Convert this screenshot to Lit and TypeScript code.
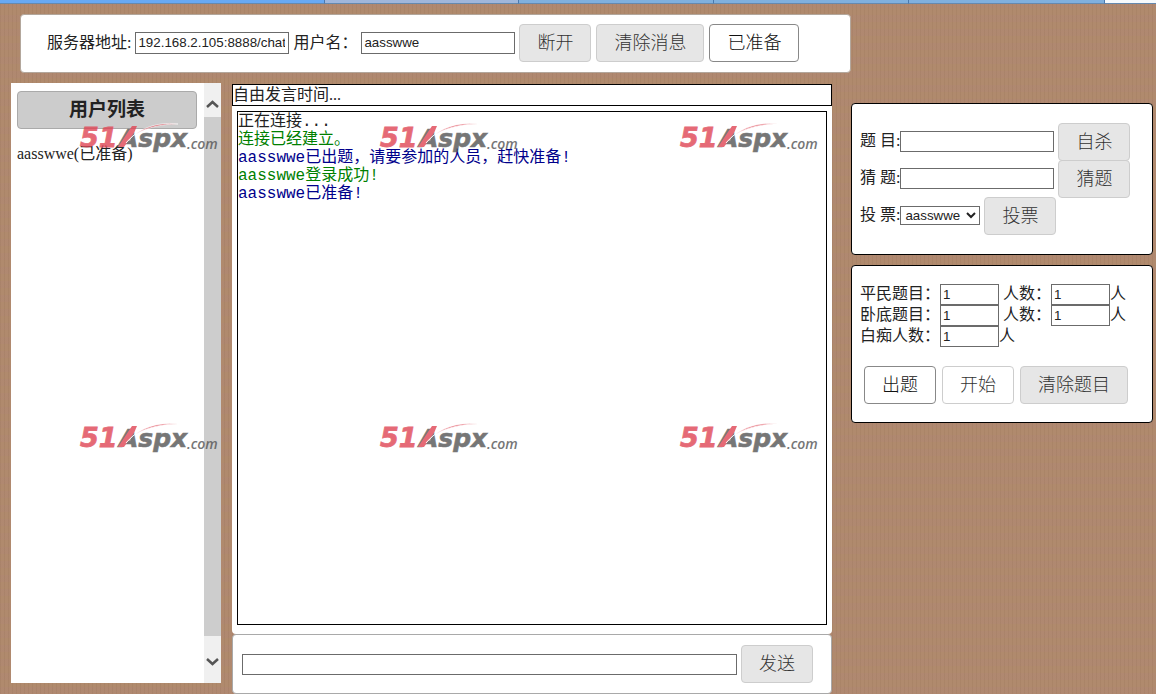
import { LitElement, html, css } from "lit";
import { customElement } from "lit/decorators.js";

const messages = [
  { text: "正在连接...", kind: "plain" },
  { text: "连接已经建立。", kind: "good" },
  { text: "aasswwe已出题，请要参加的人员，赶快准备!", kind: "info" },
  { text: "aasswwe登录成功!", kind: "good" },
  { text: "aasswwe已准备!", kind: "info" },
];

@customElement("site-mark")
class SiteMark extends LitElement {
  static styles = css`
    :host { display: block; width: 140px; height: 34px; }
    svg { display: block; overflow: visible; }
    .lead { font: italic 700 27px "DejaVu Sans", sans-serif; fill: #df4655; stroke: #df4655; stroke-width: .8px; }
    .name { font: italic 700 25px "DejaVu Sans", sans-serif; fill: #555; stroke: #555; stroke-width: .6px; }
    .tail { font: italic 600 14px "Open Sans", "Noto Sans", sans-serif; fill: #555; }
  `;
  render() {
    return html`<svg width="140" height="34" viewBox="0 0 140 34" aria-hidden="true">
      <text class="lead" x="0" y="27">51</text>
      <text class="name" x="39" y="27">Aspx</text>
      <text class="tail" x="107" y="29">.com</text>
      <path d="M38 27 L52 6 L57 6 L54 13 L44 27 Z" fill="#df4655" />
      <path d="M46 23 C56 10 76 1 98 4 C80 4 66 8 54 15 L48 21 Z" fill="#df4655" stroke="#fff" stroke-width=".7" />
    </svg>`;
  }
}

@customElement("app-root")
class AppRoot extends LitElement {
  static styles = css`
    :host {
      display: flex; flex-direction: column; position: relative;
      min-height: 100vh; overflow: hidden; color: #222;
      font: 16px/21px "Liberation Serif", "Noto Sans CJK SC", serif;
      background-color: #b08a6d;
      background-image:
        repeating-linear-gradient(90deg, rgba(80, 50, 20, .06) 0 1px, transparent 1px 4px),
        repeating-linear-gradient(0deg, rgba(175, 130, 125, .2) 0 7px, transparent 7px 14px);
    }
    * { box-sizing: border-box; }
    .strip { display: grid; grid-template-columns: 325fr 194fr 195fr 195fr 196fr 51fr; height: 4px; flex: none; }
    .strip span { background: #80b0de; border-right: 1px solid #4a78ad; border-bottom: 1px solid #6689ae; }
    .strip .active { background: #68a9f4; }
    .strip .idle { background: #a0b7dc; }
    .strip .rest { background: #f6fafd; border-right: 0; }
    .page { flex: 1; display: grid; grid-template-columns: minmax(0, 1fr) 302px; padding: 10px 3px 0 0; }
    .left { display: flex; flex-direction: column; }
    .panel { background: #fff; border: 1px solid #b3a79c; border-radius: 4px; }
    .connect { display: flex; align-items: center; gap: 4px; height: 59px; margin-left: 20px; padding: 0 26px 1px; }
    .connect .group { display: flex; gap: 5px; }
    .connect .wide { width: 64px; }
    label, .unit { white-space: pre; padding-bottom: 2px; }
    .row label { padding-bottom: 3px; }
    input, select {
      font-family: "Liberation Sans", sans-serif; color: #222; background: #fff;
      border: 1px solid #6b6b6b; border-radius: 0; height: 21px; padding: 0 2px; margin: 0; width: 154px;
    }
    .connect input { height: 22px; padding: 0 3px 1px 2px; }
    button {
      font: 300 18px/24px "Noto Sans CJK SC", sans-serif; color: #333; background: #e6e6e6;
      border: 1px solid #cdcdcd; border-radius: 4px; height: 38px; padding: 0 17px 4px; white-space: nowrap; flex: none;
    }
    .ready { color: #111; background: #fff; border-color: #888; }
    .light { background: #fff; }
    .body { flex: 1; display: flex; gap: 11px; padding: 10px 19px 0 11px; }
    .users { width: 210px; display: flex; background: #fff; margin-bottom: 11px; }
    .list { flex: 1; padding: 8px 7px 0 6px; }
    .list h2 {
      margin: 0 0 14px; height: 38px; font: 700 19px/36px "Liberation Serif", "Noto Sans CJK SC", serif;
      text-align: center; background: #ccc; border: 1px solid #aaa; border-radius: 4px;
    }
    .list ul { margin: 0; padding: 0; list-style: none; }
    .bar { width: 17px; background: #f0f0f0; display: flex; flex-direction: column; }
    .bar button { width: 100%; padding: 7px 0 0; border: 0; background: none; height: 34px; display: grid; place-items: center; border-radius: 0; }
    .bar .down { height: 47px; }
    .thumb { flex: 1; background: #cdcdcd; }
    .main { flex: 1; min-width: 0; display: flex; flex-direction: column; padding-top: 1px; }
    .timer { height: 22px; line-height: 20px; border: 1px solid #000; background: #fff; }
    .chat { flex: 1; background: #fff; padding: 5px 5px 9px; border-radius: 0 0 4px 4px; display: flex; }
    .log {
      flex: 1; border: 1px solid #000; padding-top: 1px; color: #222;
      font: 16px/18px "Liberation Mono", "Noto Sans CJK SC", monospace;
    }
    .log p { margin: 0; }
    .log .good { color: #008000; }
    .log .info { color: #00008b; }
    .send { display: flex; align-items: center; gap: 4px; height: 60px; padding: 0 18px 0 9px; border-color: #a9a9a9; }
    .send input { flex: 1; }
    .right { display: flex; flex-direction: column; gap: 10px; padding-top: 89px; }
    .right .panel { border-color: #000; }
    .play { padding: 19px 8px; height: 152px; }
    .row { display: flex; align-items: center; height: 37px; }
    .row button { margin-left: 4px; }
    .row select { width: 80px; height: 19px; padding: 0; }
    .setup { padding: 18px 8px; height: 158px; }
    .line { display: flex; align-items: center; height: 21px; }
    .line input { width: 59px; }
    .actions { display: flex; gap: 6px; padding: 19px 4px 0; }
    .marks {
      position: absolute; inset: 120px auto auto 80px; display: grid;
      grid-template-columns: repeat(3, 300px); grid-auto-rows: 300px; opacity: .8; pointer-events: none;
    }
  `;

  render() {
    return html`
      <div class="strip"><span class="active"></span><span class="idle"></span><span></span><span></span><span></span><span class="rest"></span></div>
      <div class="page">
        <div class="left">
          <header class="panel connect">
            <label for="server">服务器地址:</label>
            <input id="server" value="192.168.2.105:8888/chat" />
            <label class="wide" for="name">用户名：</label>
            <input id="name" value="aasswwe" />
            <div class="group">
              <button>断开</button><button>清除消息</button><button class="ready">已准备</button>
            </div>
          </header>
          <div class="body">
            <section class="users">
              <div class="list"><h2>用户列表</h2><ul><li>aasswwe(已准备)</li></ul></div>
              <div class="bar">
                <button aria-label="向上"><svg width="13" height="10" viewBox="0 0 13 10"><path d="M1 8 6.500 3 12 8" fill="none" stroke="#555" stroke-width="2.500"/></svg></button>
                <div class="thumb"></div>
                <button class="down" aria-label="向下"><svg width="13" height="10" viewBox="0 0 13 10"><path d="M1 1 6.500 6 12 1" fill="none" stroke="#555" stroke-width="2.500"/></svg></button>
              </div>
            </section>
            <main class="main">
              <div class="timer">自由发言时间...</div>
              <div class="chat"><div class="log">${messages.map((m) => html`<p class=${m.kind}>${m.text}</p>`)}</div></div>
              <div class="panel send"><input aria-label="消息" /><button>发送</button></div>
            </main>
          </div>
        </div>
        <aside class="right">
          <section class="panel play">
            <div class="row"><label for="topic">题 目:</label><input id="topic" /><button>自杀</button></div>
            <div class="row"><label for="guess">猜 题:</label><input id="guess" /><button>猜题</button></div>
            <div class="row"><label for="vote">投 票:</label><select id="vote"><option>aasswwe</option></select><button>投票</button></div>
          </section>
          <section class="panel setup">
            <div class="line"><label for="c1">平民题目：</label><input id="c1" value="1" /><label for="c2"> 人数：</label><input id="c2" value="1" /><span class="unit">人</span></div>
            <div class="line"><label for="s1">卧底题目：</label><input id="s1" value="1" /><label for="s2"> 人数：</label><input id="s2" value="1" /><span class="unit">人</span></div>
            <div class="line"><label for="f1">白痴人数：</label><input id="f1" value="1" /><span class="unit">人</span></div>
            <div class="actions"><button class="ready">出题</button><button class="light">开始</button><button>清除题目</button></div>
          </section>
        </aside>
      </div>
      <div class="marks">${[0, 1, 2, 3, 4, 5].map(() => html`<site-mark></site-mark>`)}</div>
    `;
  }
}
